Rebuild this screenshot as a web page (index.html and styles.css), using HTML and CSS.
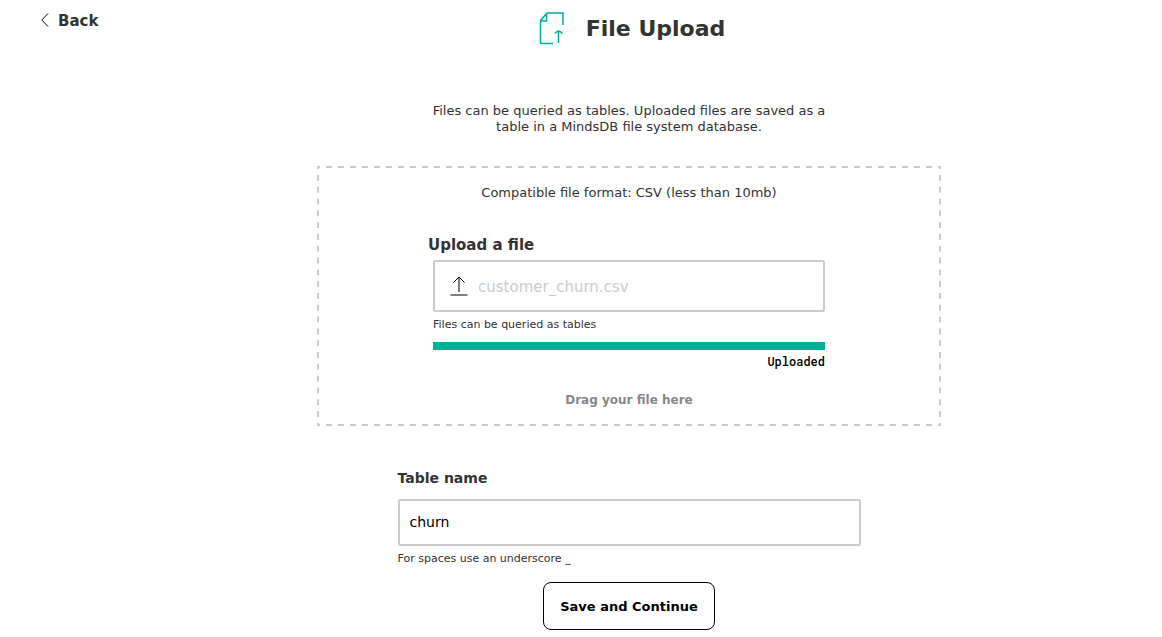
FILE: index.html
```html
<!DOCTYPE html>
<html lang="en">
<head>
<meta charset="utf-8">
<meta name="viewport" content="width=device-width, initial-scale=1">
<title>File Upload</title>
<link rel="stylesheet" href="styles.css">
</head>
<body>
<div class="page">
  <nav class="side">
    <a class="back" href="#">
      <svg class="back-icon" width="8" height="14" viewBox="0 0 8 14" aria-hidden="true"><path d="M7 .5.8 7 7 13.500"/></svg>
      Back
    </a>
  </nav>
  <main class="content">
    <header class="title">
      <svg class="title-icon" width="26" height="36" viewBox="0 0 26 36" aria-hidden="true"><path d="M24 14V2H8L1.500 9.500v23H14M7.500 2V10H1.500M19.500 32V20M16 22.500Q17.500 20.300 19.500 20Q21.500 20.300 23.500 22.500"/></svg>
      <h1 class="title-text">File Upload</h1>
    </header>
    <p class="intro">Files can be queried as tables. Uploaded files are saved as a table in a MindsDB file system database.</p>
    <form class="form">
      <section class="dropzone">
        <p class="format">Compatible file format: CSV (less than 10mb)</p>
        <div class="upload">
          <label class="upload-label" for="file">Upload a file</label>
          <div class="file-box">
            <svg class="upload-icon" width="18" height="20" viewBox="0 0 18 20" aria-hidden="true"><path d="M9 16V1M3.500 6.500 9 1l5.500 5.500M.5 19h17"/></svg>
            <input class="file-input" id="file" type="text" placeholder="customer_churn.csv" readonly>
          </div>
          <p class="hint">Files can be queried as tables</p>
          <div class="progress" role="progressbar" aria-label="Upload progress" aria-valuenow="100"><div class="progress-fill"></div></div>
          <p class="status">Uploaded</p>
        </div>
        <p class="drag">Drag your file here</p>
      </section>
      <div class="table-field">
        <label class="table-label" for="table">Table name</label>
        <input class="table-input" id="table" type="text" value="churn">
        <p class="hint">For spaces use an underscore _</p>
      </div>
      <button class="save" type="button">Save and Continue</button>
    </form>
  </main>
</div>
</body>
</html>
```
FILE: styles.css
```css
* { box-sizing: border-box; }
body {
  margin: 0;
  background: #fff;
  color: #333;
  font-family: "DejaVu Sans", sans-serif;
  font-size: 13px;
  line-height: 16px;
}
h1, p { margin: 0; }
input, button { font-family: inherit; color: #000; }
svg { fill: none; flex: none; }
.page { display: flex; }
.side { width: 96px; flex: none; padding: 10px 0 0 41px; }
.back {
  display: flex;
  align-items: center;
  gap: 9px;
  color: #333;
  font-size: 15px;
  font-weight: bold;
  line-height: 22px;
  text-decoration: none;
}
.back-icon { margin-bottom: 2px; stroke: #000; }
.content {
  flex: 1;
  display: flex;
  flex-direction: column;
  align-items: center;
  padding: 11px 16px 7px;
}
.title { display: flex; align-items: center; gap: 21px; padding-left: 6px; }
.title-icon { stroke: #00b096; stroke-width: 1.5; stroke-linejoin: round; }
.title-text { font-size: 22px; line-height: 36px; }
.intro { max-width: 400px; margin-top: 56px; text-align: center; }
.form {
  width: 100%;
  display: flex;
  flex-direction: column;
  align-items: center;
}
/* Dashed frame with dashes and gaps of equal length */
.dropzone {
  --dash-x: linear-gradient(90deg, #ccc 25%, transparent 25% 75%, #ccc 75%);
  --dash-y: linear-gradient(#ccc 25%, transparent 25% 75%, #ccc 75%);
  width: 100%;
  max-width: 624px;
  margin-top: 31px;
  padding: 19px 18px 18px;
  display: flex;
  flex-direction: column;
  align-items: center;
  background:
    var(--dash-x) left top / 12px 2px round no-repeat,
    var(--dash-x) left bottom / 12px 2px round no-repeat,
    var(--dash-y) left top / 2px 12px no-repeat round,
    var(--dash-y) right top / 2px 12px no-repeat round;
}
.upload {
  width: 100%;
  max-width: 392px;
  margin-top: 34px;
  display: flex;
  flex-direction: column;
}
.upload-label { margin-left: -5px; font-size: 15px; font-weight: bold; line-height: 20px; }
.file-box {
  height: 52px;
  margin-top: 5px;
  padding: 0 15px;
  display: flex;
  align-items: center;
  gap: 10px;
  border: 2px solid #ccc;
  border-radius: 2px;
}
.upload-icon { stroke: #000; }
.file-input {
  flex: 1;
  min-width: 0;
  padding: 2px 0 0;
  border: 0;
  outline: 0;
  background: none;
  font-size: 15px;
}
.file-input::placeholder { color: #ccc; opacity: 1; }
.hint { margin-top: 5px; font-size: 11px; }
.progress { height: 8px; margin-top: 9px; background: #eee; }
.progress-fill { height: 100%; background: #00b096; }
.status {
  margin-top: 3px;
  color: #000;
  font-family: "Roboto Mono", "Liberation Mono", monospace;
  font-size: 12px;
  font-weight: 500;
  text-align: right;
}
.drag { margin-top: 23px; color: #888; font-size: 12px; font-weight: bold; }
.table-field {
  width: 100%;
  max-width: 463px;
  margin-top: 44px;
  display: flex;
  flex-direction: column;
}
.table-label { font-size: 14px; font-weight: bold; }
.table-input {
  width: 100%;
  height: 47px;
  margin-top: 13px;
  padding: 0 10px 2px;
  border: 2px solid #ccc;
  border-radius: 2px;
  font-size: 14px;
}
.save {
  height: 48px;
  margin-top: 15px;
  padding: 0 16px;
  border: 1px solid #000;
  border-radius: 8px;
  background: #fff;
  font-size: 13px;
  font-weight: bold;
}
```
